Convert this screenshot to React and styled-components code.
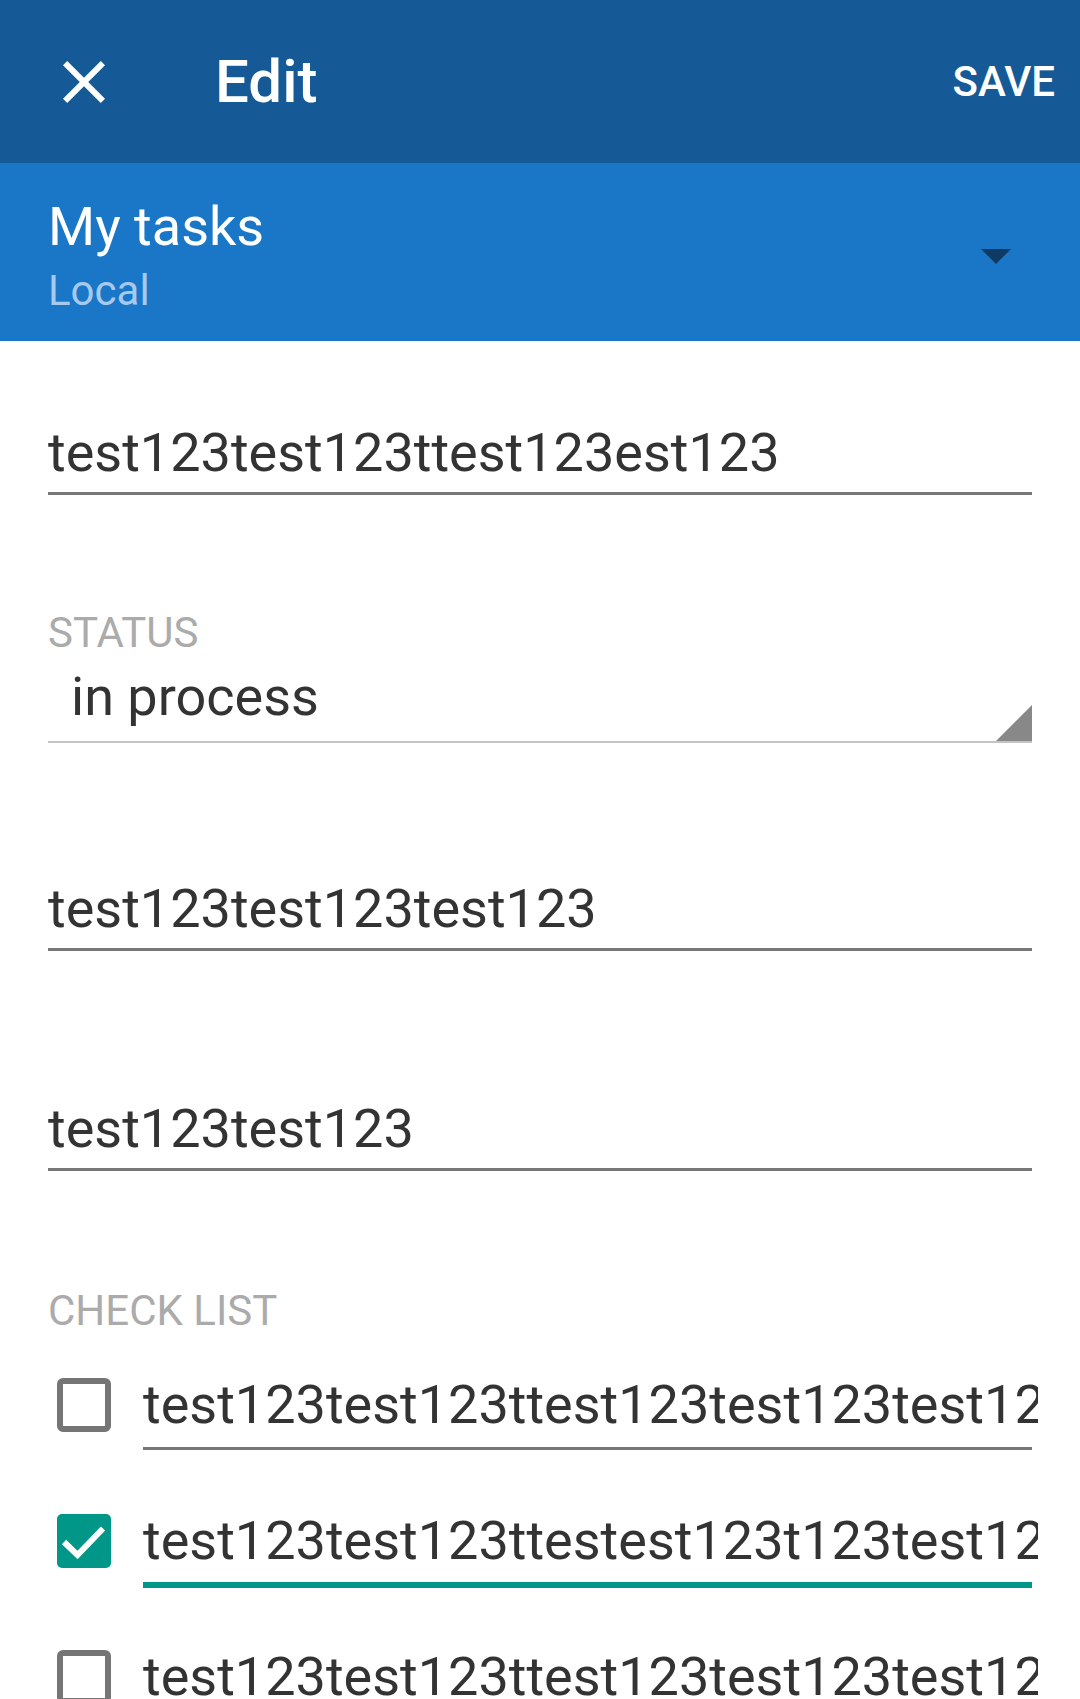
import React from "react";
import styled, { createGlobalStyle } from "styled-components";

const GlobalStyle = createGlobalStyle`
  html, body { margin: 0; padding: 0; background: #ffffff; }
  body {
    font-family: Roboto, "Noto Sans", "Liberation Sans", sans-serif;
    -webkit-font-smoothing: antialiased;
  }
  * { box-sizing: border-box; }
`;

const Page = styled.div`
  width: 1080px;
  min-height: 1699px;
  background: #ffffff;
  overflow: hidden;
`;

const Toolbar = styled.header`
  height: 163px;
  background: #155a96;
  display: flex;
  align-items: center;
  padding: 0 25px 0 48px;
  color: #ffffff;
`;

const IconBox = styled.div`
  width: 72px;
  height: 72px;
  flex: none;
  margin-top: ${(p) => p.$top || 0}px;
  svg { display: block; width: 72px; height: 72px; }
`;

const Title = styled.h1`
  margin: 0 0 0 95px;
  font-size: 60px;
  font-weight: 500;
  line-height: 72px;
  color: #ffffff;
`;

const SaveButton = styled.button`
  margin-left: auto;
  background: none;
  border: 0;
  padding: 0;
  color: #ffffff;
  font-family: Roboto, "Noto Sans", sans-serif;
  font-size: 42px;
  font-weight: 500;
  line-height: 48px;
`;

const AccountBar = styled.div`
  height: 178px;
  background: #1a76c6;
  display: flex;
  align-items: flex-start;
  padding: 32px 48px 0 48px;
`;

const AccountText = styled.div`
  flex: 1;
  display: flex;
  flex-direction: column;
  gap: 8px;
`;

const AccountName = styled.div`
  font-size: 54px;
  line-height: 64px;
  color: #ffffff;
`;

const AccountType = styled.div`
  font-size: 42px;
  line-height: 48px;
  color: #a5caee;
`;

const Form = styled.main`
  padding: 0 48px;
  display: flex;
  flex-direction: column;
`;

const Field = styled.div`
  margin-top: ${(p) => p.$top}px;
  font-size: 54px;
  line-height: 64px;
  color: #333333;
  white-space: nowrap;
  padding-bottom: 7px;
  border-bottom: 3px solid #777777;
`;

const Label = styled.div`
  margin-top: ${(p) => p.$top}px;
  font-size: 42px;
  line-height: 48px;
  color: #ababab;
`;

const Spinner = styled.div`
  position: relative;
  margin-top: 8px;
  padding: 0 0 12px 23px;
  font-size: 54px;
  line-height: 64px;
  color: #333333;
  border-bottom: 2px solid #c4c4c4;
  &::after {
    content: "";
    position: absolute;
    right: 0;
    bottom: 0;
    width: 36px;
    height: 36px;
    background: #888888;
    clip-path: polygon(100% 0, 100% 100%, 0 100%);
  }
`;

const CheckList = styled.div`
  margin-top: 38px;
  display: flex;
  flex-direction: column;
`;

const CheckRow = styled.div`
  display: flex;
  align-items: flex-start;
  height: 136px;
`;

const CheckBoxWrap = styled.div`
  width: 54px;
  height: 54px;
  margin: 5px 0 0 9px;
  flex: none;
  svg { display: block; }
`;

const ItemField = styled.div`
  flex: 1;
  min-width: 0;
  margin-left: 32px;
  padding-bottom: ${(p) => (p.$focused ? 9 : 10)}px;
  border-bottom: ${(p) => (p.$focused ? "6px solid #009688" : "3px solid #777777")};
`;

const ItemText = styled.div`
  margin-right: -6px;
  overflow: hidden;
  white-space: nowrap;
  font-size: 54px;
  line-height: 64px;
  color: #333333;
`;

const CloseIcon = () => (
  <svg viewBox="0 0 24 24">
    <path
      fill="#ffffff"
      d="M19 6.41L17.59 5 12 10.59 6.41 5 5 6.41 10.59 12 5 17.59 6.41 19 12 13.41 17.59 19 19 17.59 13.41 12z"
    />
  </svg>
);

const DropIcon = () => (
  <svg viewBox="0 0 24 24">
    <path fill="#0e3a63" d="M7 10l5 5 5-5z" />
  </svg>
);

const CheckBox = ({ checked }) =>
  checked ? (
    <svg width="54" height="54" viewBox="0 0 54 54">
      <rect x="0" y="0" width="54" height="54" rx="5" fill="#009688" />
      <polyline
        points="7,28 20.5,41 46,14.5"
        fill="none"
        stroke="#ffffff"
        strokeWidth="6"
      />
    </svg>
  ) : (
    <svg width="54" height="54" viewBox="0 0 54 54">
      <rect
        x="3"
        y="3"
        width="48"
        height="48"
        rx="3"
        fill="#ffffff"
        stroke="#757575"
        strokeWidth="6"
      />
    </svg>
  );

const items = [
  { text: "test123test123ttest123test123test123test123", checked: false, focused: false },
  { text: "test123test123ttestest123t123test123test123", checked: true, focused: true },
  { text: "test123test123ttest123test123test123test123", checked: false, focused: false },
];

export default function App() {
  return (
    <Page>
      <GlobalStyle />
      <Toolbar>
        <IconBox>
          <CloseIcon />
        </IconBox>
        <Title>Edit</Title>
        <SaveButton>SAVE</SaveButton>
      </Toolbar>
      <AccountBar>
        <AccountText>
          <AccountName>My tasks</AccountName>
          <AccountType>Local</AccountType>
        </AccountText>
        <IconBox $top={24}>
          <DropIcon />
        </IconBox>
      </AccountBar>
      <Form>
        <Field $top={80}>test123test123ttest123est123</Field>
        <Label $top={114}>STATUS</Label>
        <Spinner>in process</Spinner>
        <Field $top={134}>test123test123test123</Field>
        <Field $top={146}>test123test123</Field>
        <Label $top={116}>CHECK LIST</Label>
        <CheckList>
          {items.map((it, i) => (
            <CheckRow key={i}>
              <CheckBoxWrap>
                <CheckBox checked={it.checked} />
              </CheckBoxWrap>
              <ItemField $focused={it.focused}>
                <ItemText>{it.text}</ItemText>
              </ItemField>
            </CheckRow>
          ))}
        </CheckList>
      </Form>
    </Page>
  );
}
